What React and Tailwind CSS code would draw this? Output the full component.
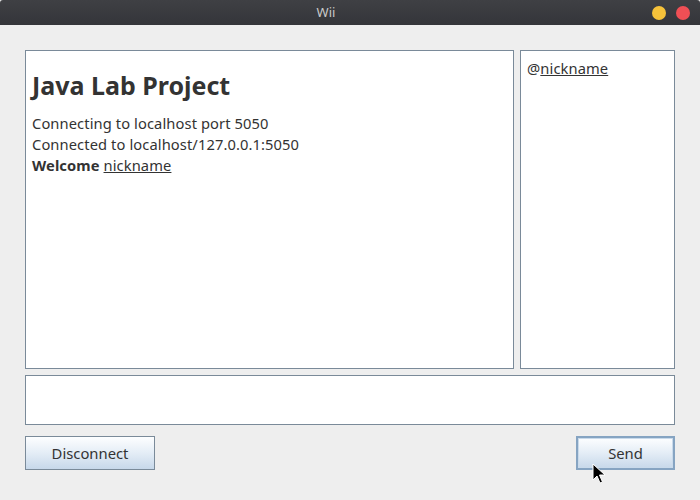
const font = { fontFamily: '"Noto Sans", "Open Sans", sans-serif' }

function TitleBar() {
  return (
    <div className="h-[26px] flex items-center rounded-tl-[3px] rounded-tr-[3px] bg-gradient-to-b from-[#3f4044] to-[#34353a]">
      <div className="flex-1 text-center text-[13px] text-[#c9c9c9]">Wii</div>
      <div className="w-[48px] flex items-center gap-[10px] pr-[10px]">
        <span className="w-[14px] h-[14px] rounded-full bg-[#f6c23a]" />
        <span className="w-[14px] h-[14px] rounded-full bg-[#ef4f55]" />
      </div>
    </div>
  )
}

function Button({ children, focused, className = '' }) {
  return (
    <button
      className={`h-[34px] text-[14.8px] text-[#333] bg-gradient-to-b from-[#fdfeff] via-[#e4edf6] to-[#c7d8ea] ${
        focused ? 'border-2 border-[#86a4c2] ring-1 ring-inset ring-[#c9daeb]' : 'border border-[#7a8a99]'
      } ${className}`}>
      {children}
    </button>
  )
}

function Cursor({ className }) {
  return (
    <svg width="14" height="22" viewBox="0 0 14 22" className={className}>
      <path d="M1 1 L1 17 L5 13 L8 20 L10.5 19 L7.5 12 L13 12 Z" fill="#000" stroke="#fff" strokeWidth="1" strokeLinejoin="round" />
    </svg>
  )
}

export default function App() {
  return (
    <div className="w-[700px] h-[500px] bg-[#eeeeee] flex flex-col text-[#333]" style={font}>
      <TitleBar />
      <div className="flex-1 flex flex-col pt-[25px] px-[25px] pb-[30px]">
        <div className="flex gap-[6px] h-[319px]">
          <div className="flex-1 bg-white border border-[#7a8a99] px-[6px] pt-[16px]">
            <h1 className="text-[25px] font-bold leading-[36px] mb-[10px]">Java Lab Project</h1>
            <div className="text-[14.7px] leading-[21px] tracking-[0.1px]">
              <p>Connecting to localhost port 5050</p>
              <p>Connected to localhost/127.0.0.1:5050</p>
              <p>
                <b>Welcome</b> <span className="underline">nickname</span>
              </p>
            </div>
          </div>
          <div className="w-[155px] bg-white border border-[#7a8a99] px-[6px] pt-[7px]">
            <p className="text-[14.7px] leading-[21px] tracking-[0.1px]">
              @<span className="underline">nickname</span>
            </p>
          </div>
        </div>
        <div className="mt-[6px] h-[50px] bg-white border border-[#7a8a99]" />
        <div className="mt-[11px] flex justify-between relative">
          <Button className="w-[130px]">Disconnect</Button>
          <Button focused className="w-[99px]">Send</Button>
          <Cursor className="absolute left-[567px] top-[27px]" />
        </div>
      </div>
    </div>
  )
}
